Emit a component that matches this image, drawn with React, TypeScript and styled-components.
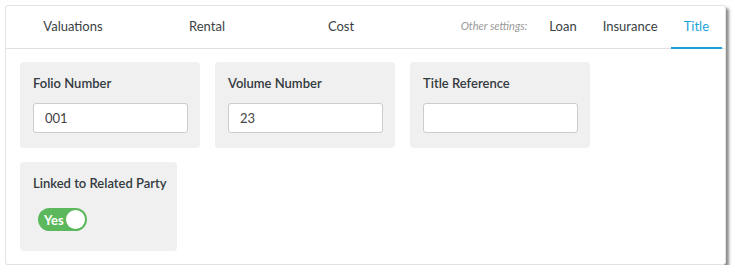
import React, { useState } from "react";
import styled, { createGlobalStyle } from "styled-components";

const GlobalStyle = createGlobalStyle`
  body {
    margin: 0;
    background: #ffffff;
    font-family: Lato, "Liberation Sans", sans-serif;
  }
`;

export default function App() {
  const [linked, setLinked] = useState(true);
  const mainTabs = ["Valuations", "Rental", "Cost"];
  const otherTabs = ["Loan", "Insurance", "Title"];

  return (
    <>
      <GlobalStyle />
      <Card>
        <TabBar>
          <MainTabs>
            {mainTabs.map((t) => (
              <MainTab key={t}>{t}</MainTab>
            ))}
          </MainTabs>
          <OtherTabs>
            <OtherLabel>Other settings:</OtherLabel>
            {otherTabs.map((t) => (
              <OtherTab key={t} $active={t === "Title"}>
                {t}
              </OtherTab>
            ))}
          </OtherTabs>
        </TabBar>
        <Content>
          <FieldRow>
            <FieldBox>
              <FieldLabel>Folio Number</FieldLabel>
              <TextInput defaultValue="001" />
            </FieldBox>
            <FieldBox>
              <FieldLabel>Volume Number</FieldLabel>
              <TextInput defaultValue="23" />
            </FieldBox>
            <FieldBox>
              <FieldLabel>Title Reference</FieldLabel>
              <TextInput defaultValue="" />
            </FieldBox>
          </FieldRow>
          <FieldRow>
            <ToggleBox>
              <FieldLabel>Linked to Related Party</FieldLabel>
              <Toggle $on={linked} onClick={() => setLinked(!linked)}>
                <ToggleText>{linked ? "Yes" : "No"}</ToggleText>
                <Knob $on={linked} />
              </Toggle>
            </ToggleBox>
          </FieldRow>
        </Content>
      </Card>
    </>
  );
}

const Card = styled.div`
  margin: 5px 0 0 5px;
  width: 721px;
  height: 260px;
  box-sizing: border-box;
  background: #fff;
  border: 1px solid #e2e2e2;
  border-radius: 3px;
  box-shadow: 3px 3px 3px rgba(0, 0, 0, 0.45);
`;

const TabBar = styled.div`
  display: flex;
  justify-content: space-between;
  align-items: stretch;
  height: 42px;
  border-bottom: 1px solid #e0e0e0;
`;

const MainTabs = styled.div`
  display: flex;
`;

const MainTab = styled.div`
  width: 134px;
  display: flex;
  align-items: center;
  justify-content: center;
  font-size: 13px;
  color: #3a3f44;
  padding-bottom: 3px;
`;

const OtherTabs = styled.div`
  display: flex;
  align-items: stretch;
  padding-right: 3px;
`;

const OtherLabel = styled.div`
  display: flex;
  align-items: center;
  font-size: 11px;
  font-style: italic;
  color: #9a9a9a;
  margin-right: 9px;
  padding-bottom: 3px;
`;

const OtherTab = styled.div<{ $active?: boolean }>`
  display: flex;
  align-items: center;
  padding: 0 13px 1px;
  font-size: 13px;
  color: ${(p) => (p.$active ? "#1ba3d9" : "#3a3f44")};
  border-bottom: 2px solid ${(p) => (p.$active ? "#1ba3d9" : "transparent")};
  margin-bottom: -1px;
`;

const Content = styled.div`
  display: flex;
  flex-direction: column;
  gap: 14px;
  padding: 13px 14px;
`;

const FieldRow = styled.div`
  display: flex;
  gap: 15px;
`;

const FieldBox = styled.div`
  width: 180px;
  height: 86px;
  box-sizing: border-box;
  background: #f0f0f0;
  border-radius: 4px;
  padding: 13px 13px 0;
`;

const ToggleBox = styled(FieldBox)`
  width: 157px;
  height: 89px;
`;

const FieldLabel = styled.div`
  font-size: 13px;
  font-weight: 600;
  color: #333a40;
  line-height: 16px;
  margin-bottom: 12px;
  white-space: nowrap;
`;

const TextInput = styled.input`
  width: 155px;
  height: 30px;
  box-sizing: border-box;
  border: 1px solid #cccccc;
  border-radius: 3px;
  background: #fff;
  padding: 0 11px;
  font-family: Lato, "Liberation Sans", sans-serif;
  font-size: 13px;
  color: #444;
  outline: none;
`;

const Toggle = styled.div<{ $on: boolean }>`
  margin: 17px 0 0 5px;
  width: 49px;
  height: 23px;
  box-sizing: border-box;
  border-radius: 12px;
  background: ${(p) => (p.$on ? "#5cb85c" : "#c8c8c8")};
  display: flex;
  align-items: center;
  justify-content: space-between;
  padding: 0 2px 0 6px;
  cursor: pointer;
`;

const ToggleText = styled.span`
  color: #fff;
  font-size: 13px;
  font-weight: 700;
`;

const Knob = styled.span<{ $on: boolean }>`
  width: 19px;
  height: 19px;
  border-radius: 50%;
  background: #fff;
`;
